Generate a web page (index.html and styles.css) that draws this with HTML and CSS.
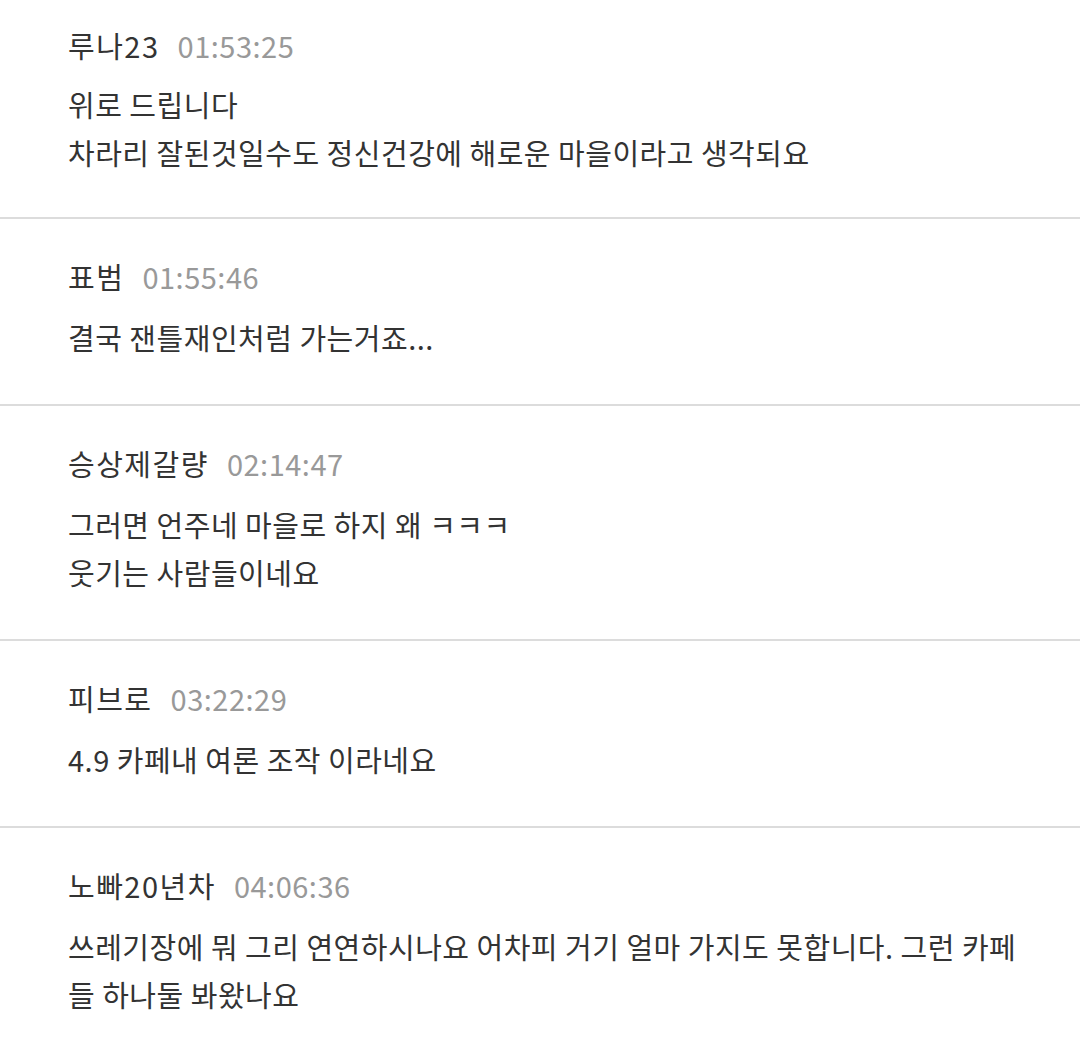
FILE: index.html
```html
<html>
<head>
	<meta charset="utf-8">
	<title>댓글</title>
	<link rel="stylesheet" href="styles.css">
</head>
<body>
<ul class="comments">
	<li class="comment">
		<div class="meta"><span class="nick">루나23</span><span class="time">01:53:25</span></div>
		<p class="text">위로 드립니다<br>차라리 잘된것일수도 정신건강에 해로운 마을이라고 생각되요</p>
	</li>
	<li class="comment">
		<div class="meta"><span class="nick">표범</span><span class="time">01:55:46</span></div>
		<p class="text">결국 잰틀재인처럼 가는거죠...</p>
	</li>
	<li class="comment">
		<div class="meta"><span class="nick">승상제갈량</span><span class="time">02:14:47</span></div>
		<p class="text">그러면 언주네 마을로 하지 왜 ㅋㅋㅋ<br>웃기는 사람들이네요</p>
	</li>
	<li class="comment">
		<div class="meta"><span class="nick">피브로</span><span class="time">03:22:29</span></div>
		<p class="text">4.9 카페내 여론 조작 이라네요</p>
	</li>
	<li class="comment">
		<div class="meta"><span class="nick">노빠20년차</span><span class="time">04:06:36</span></div>
		<p class="text">쓰레기장에 뭐 그리 연연하시나요 어차피 거기 얼마 가지도 못합니다. 그런 카페들 하나둘 봐왔나요</p>
	</li>
</ul>
</body>
</html>
```

FILE: styles.css
```css
body, html {
	margin: 0;
	background: #fff;
	font-family: "Noto Sans CJK KR", "Noto Sans", sans-serif;
	color: #333;
}

.comments {
	list-style: none;
	margin: 0;
	padding: 0;
}

.comment {
	padding: 33px 52px 43px 68px;
	border-bottom: 2px solid #dcdcdc;
}
.comment:first-child {
	padding-top: 21px;
	padding-bottom: 41px;
}
.comment:last-child {
	border-bottom: none;
}

.meta {
	display: flex;
	align-items: baseline;
	gap: 18px;
	font-size: 29px;
	line-height: 48px;
}
.nick {
	color: #333;
	letter-spacing: 1.5px;
}
.time {
	color: #999;
	letter-spacing: 0.5px;
}

.text {
	margin: 13px 0 0;
	font-size: 29px;
	line-height: 48px;
	letter-spacing: 0.5px;
}
.comment:first-child .text {
	margin-top: 11px;
}
```
